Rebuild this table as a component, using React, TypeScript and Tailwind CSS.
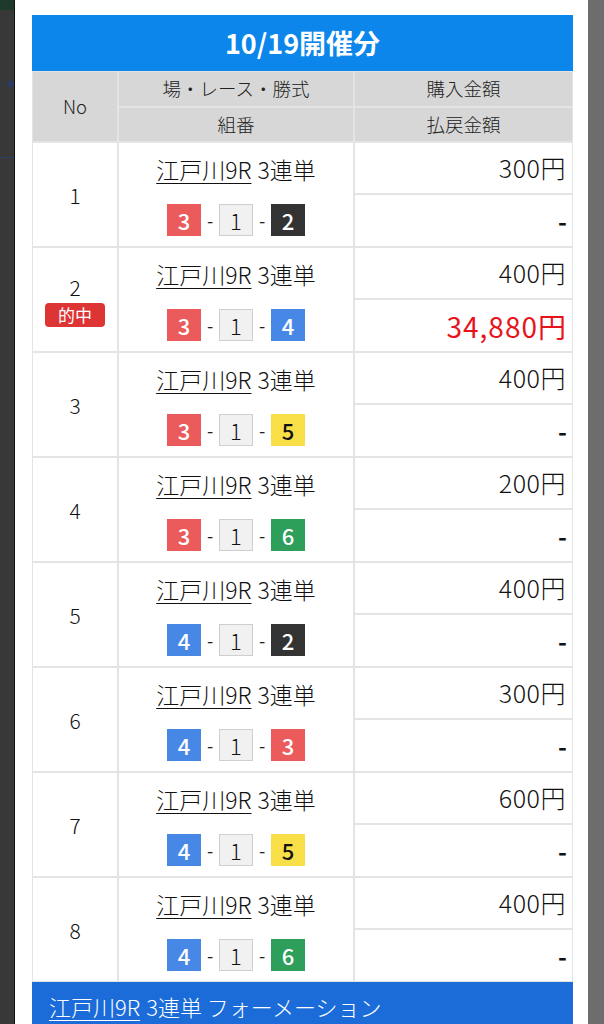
import React from "react";

type Color = "red" | "white" | "black" | "blue" | "yellow" | "green";

const boxClass: Record<Color, string> = {
  red: "bg-[#eb5b5b] text-white font-medium",
  white: "bg-[#f1f1f1] text-[#111] border border-[#cfcfcf] font-light",
  black: "bg-[#333333] text-white font-medium",
  blue: "bg-[#4788e6] text-white font-medium",
  yellow: "bg-[#f8df47] text-[#111] font-medium",
  green: "bg-[#2e9f5b] text-white font-medium",
};

const numColor: Record<number, Color> = {
  1: "white",
  2: "black",
  3: "red",
  4: "blue",
  5: "yellow",
  6: "green",
};

type Row = { no: number; combo: number[]; amount: string; payout?: string };

const rows: Row[] = [
  { no: 1, combo: [3, 1, 2], amount: "300円" },
  { no: 2, combo: [3, 1, 4], amount: "400円", payout: "34,880円" },
  { no: 3, combo: [3, 1, 5], amount: "400円" },
  { no: 4, combo: [3, 1, 6], amount: "200円" },
  { no: 5, combo: [4, 1, 2], amount: "400円" },
  { no: 6, combo: [4, 1, 3], amount: "300円" },
  { no: 7, combo: [4, 1, 5], amount: "600円" },
  { no: 8, combo: [4, 1, 6], amount: "400円" },
];

function Box({ n }: { n: number }) {
  return (
    <span
      className={`flex h-[32px] w-[34px] items-center justify-center text-[22px] leading-none ${boxClass[numColor[n]]}`}
    >
      {n}
    </span>
  );
}

export default function App() {
  return (
    <div
      className="flex h-[1024px] w-[604px] overflow-hidden bg-[#6d6d6d]"
      style={{ fontFamily: '"Noto Sans CJK JP", "Noto Sans", sans-serif' }}
    >
      {/* left overlay strip */}
      <div className="relative h-full w-[14px] shrink-0 bg-[#383838]">
        <div className="absolute left-0 top-0 h-[10px] w-[14px] bg-[#1d3a2b]" />
        <div className="absolute left-[8px] top-[81px] h-[6px] w-[5px] bg-[#2a3a6a]" />
        <div className="absolute left-0 top-[157px] h-[1px] w-[14px] bg-[#2a3f6a]" />
      </div>
      <div className="h-full w-[1px] shrink-0 bg-[#111]" />

      {/* modal */}
      <div className="h-full w-[573px] shrink-0 bg-white pl-[17px] pt-[15px]">
        <div className="w-[541px]">
          <div className="flex h-[56px] items-center justify-center bg-[#0c86ea] text-[27px] font-bold text-white">
            10/19開催分
          </div>
          <div className="flex flex-col gap-[2px] bg-[#e4e4e4] p-[1px]">
            {/* header */}
            <div className="grid grid-cols-[84px_234px_217px] grid-rows-[34px_33px] gap-[2px] text-[18.5px] font-light text-[#222]">
              <div className="row-span-2 flex items-center justify-center bg-[#d7d7d7]">No</div>
              <div className="flex items-center justify-center bg-[#d7d7d7]">場・レース・勝式</div>
              <div className="flex items-center justify-center bg-[#d7d7d7]">購入金額</div>
              <div className="flex items-center justify-center bg-[#d7d7d7]">組番</div>
              <div className="flex items-center justify-center bg-[#d7d7d7]">払戻金額</div>
            </div>
            {rows.map((r) => (
              <div key={r.no} className="grid h-[103px] grid-cols-[84px_234px_217px] gap-[2px]">
                <div className="flex flex-col items-center justify-center bg-white text-[21px] font-light text-[#111]">
                  <span className="leading-[28px]">{r.no}</span>
                  {r.payout && (
                    <span className="mt-[2px] flex h-[24px] w-[60px] items-center justify-center rounded-[4px] bg-[#dd3434] text-[17px] font-normal leading-none text-white">
                      的中
                    </span>
                  )}
                </div>
                <div className="flex flex-col items-center bg-white pt-[11px]">
                  <div className="h-[30px] text-[23px] font-light leading-[30px] text-[#111]">
                    <span className="underline underline-offset-[4px] decoration-[1px]">江戸川9R</span>
                    <span className="ml-[6px]">3連単</span>
                  </div>
                  <div className="mt-[20px] flex items-center">
                    <Box n={r.combo[0]} />
                    <span className="w-[18px] text-center text-[18px] text-[#222]">-</span>
                    <Box n={r.combo[1]} />
                    <span className="w-[18px] text-center text-[18px] text-[#222]">-</span>
                    <Box n={r.combo[2]} />
                  </div>
                </div>
                <div className="flex flex-col gap-[2px]">
                  <div className="flex h-[50px] items-center justify-end bg-white pr-[6px] text-[25px] font-light tracking-[0.5px] text-[#111]">
                    {r.amount}
                  </div>
                  {r.payout ? (
                    <div className="flex h-[51px] items-center justify-end bg-white pr-[5px] text-[28px] font-normal tracking-[1px] text-[#e8141c]">
                      {r.payout}
                    </div>
                  ) : (
                    <div className="flex h-[51px] items-center justify-end bg-white pr-[5px] text-[24px] font-bold text-[#111]">
                      -
                    </div>
                  )}
                </div>
              </div>
            ))}
          </div>
          <div className="flex h-[60px] items-start bg-[#1b6cd9] pl-[17px] pt-[8px] text-[22px] font-light text-white">
            <span className="underline underline-offset-[4px] decoration-[1px]">江戸川9R</span>
            <span className="ml-[6px]">3連単 フォーメーション</span>
          </div>
        </div>
      </div>
      {/* right overlay strip */}
      <div className="h-full flex-1 bg-[#6d6d6d]" />
    </div>
  );
}
